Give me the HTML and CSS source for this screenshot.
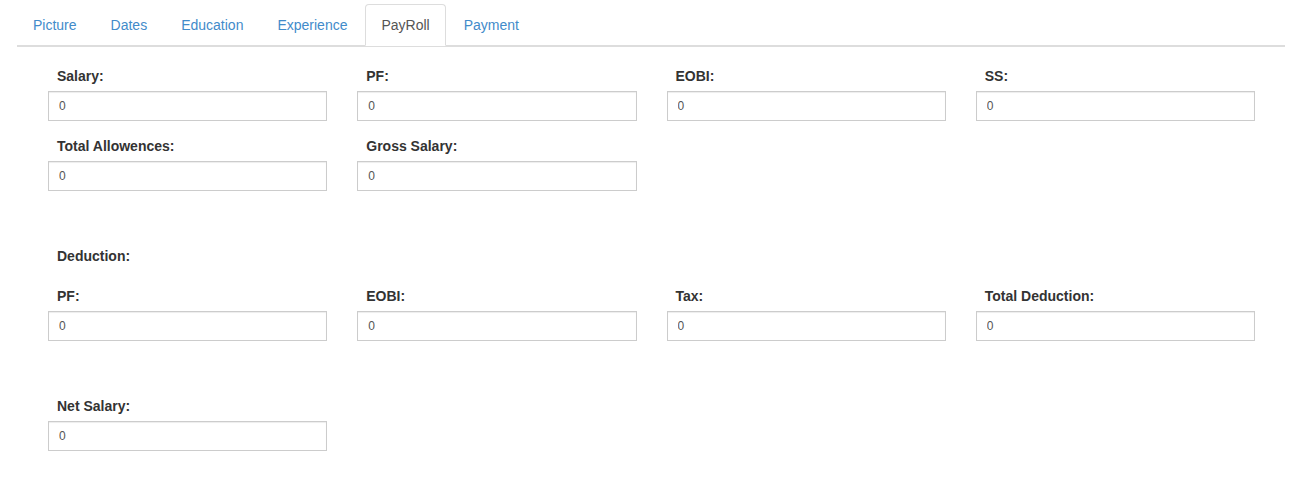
FILE: index.html
```html
<!DOCTYPE html>
<html lang="en">
<head>
<meta charset="utf-8">
<title>PayRoll</title>
<link rel="stylesheet" href="styles.css">
</head>
<body>
<div class="page">
  <ul class="tabs">
    <li class="tab"><a href="#">Picture</a></li>
    <li class="tab"><a href="#">Dates</a></li>
    <li class="tab"><a href="#">Education</a></li>
    <li class="tab"><a href="#">Experience</a></li>
    <li class="tab active"><a href="#">PayRoll</a></li>
    <li class="tab"><a href="#">Payment</a></li>
  </ul>
  <div class="tab-content">
    <div class="grid">
      <div class="group"><label class="lbl">Salary:</label><input class="field" type="text" value="0"></div>
      <div class="group"><label class="lbl">PF:</label><input class="field" type="text" value="0"></div>
      <div class="group"><label class="lbl">EOBI:</label><input class="field" type="text" value="0"></div>
      <div class="group"><label class="lbl">SS:</label><input class="field" type="text" value="0"></div>
      <div class="group"><label class="lbl">Total Allowences:</label><input class="field" type="text" value="0"></div>
      <div class="group"><label class="lbl">Gross Salary:</label><input class="field" type="text" value="0"></div>
    </div>
    <div class="section-title lbl">Deduction:</div>
    <div class="grid">
      <div class="group"><label class="lbl">PF:</label><input class="field" type="text" value="0"></div>
      <div class="group"><label class="lbl">EOBI:</label><input class="field" type="text" value="0"></div>
      <div class="group"><label class="lbl">Tax:</label><input class="field" type="text" value="0"></div>
      <div class="group"><label class="lbl">Total Deduction:</label><input class="field" type="text" value="0"></div>
    </div>
    <div class="grid net">
      <div class="group"><label class="lbl">Net Salary:</label><input class="field" type="text" value="0"></div>
    </div>
  </div>
</div>
</body>
</html>
```

FILE: styles.css
```css
* { box-sizing: border-box; }
html, body { margin: 0; padding: 0; background: #fff; }
body {
  font-family: "Liberation Sans", Arial, Helvetica, sans-serif;
  font-size: 14px;
  line-height: 20px;
  color: #333;
}
.page {
  padding: 4px 11px 0 17px;
}
.tabs {
  list-style: none;
  margin: 0;
  padding: 0;
  display: flex;
  border-bottom: 1px solid #ddd;
}
.tab {
  margin-bottom: -1px;
}
.tab a {
  display: block;
  padding: 10px 15px;
  margin-right: 2px;
  line-height: 20px;
  border: 1px solid transparent;
  border-radius: 4px 4px 0 0;
  color: #428bca;
  text-decoration: none;
}
.tab.active a {
  color: #555;
  background: #fff;
  border-color: #ddd #ddd transparent;
}
.tab-content {
  border-top: 1px solid #ddd;
  padding: 19px 30px 20px 31px;
}
.grid {
  display: grid;
  grid-template-columns: repeat(4, 1fr);
  column-gap: 30px;
}
.group {
  display: flex;
  flex-direction: column;
  margin-bottom: 15px;
}
.lbl {
  font-weight: bold;
  color: #333;
  padding-left: 9px;
  line-height: 20px;
  margin-bottom: 5px;
}
.section-title {
  margin-top: 40px;
  margin-bottom: 20px;
}
.net {
  margin-top: 40px;
}
.field {
  height: 30px;
  width: 100%;
  padding: 5px 10px;
  font-family: "Liberation Sans", Arial, Helvetica, sans-serif;
  font-size: 12px;
  line-height: 1.5;
  color: #555;
  background: #fff;
  border: 1px solid #ccc;
  border-radius: 0;
  box-shadow: inset 0 1px 1px rgba(0,0,0,.075);
  outline: none;
}
```
